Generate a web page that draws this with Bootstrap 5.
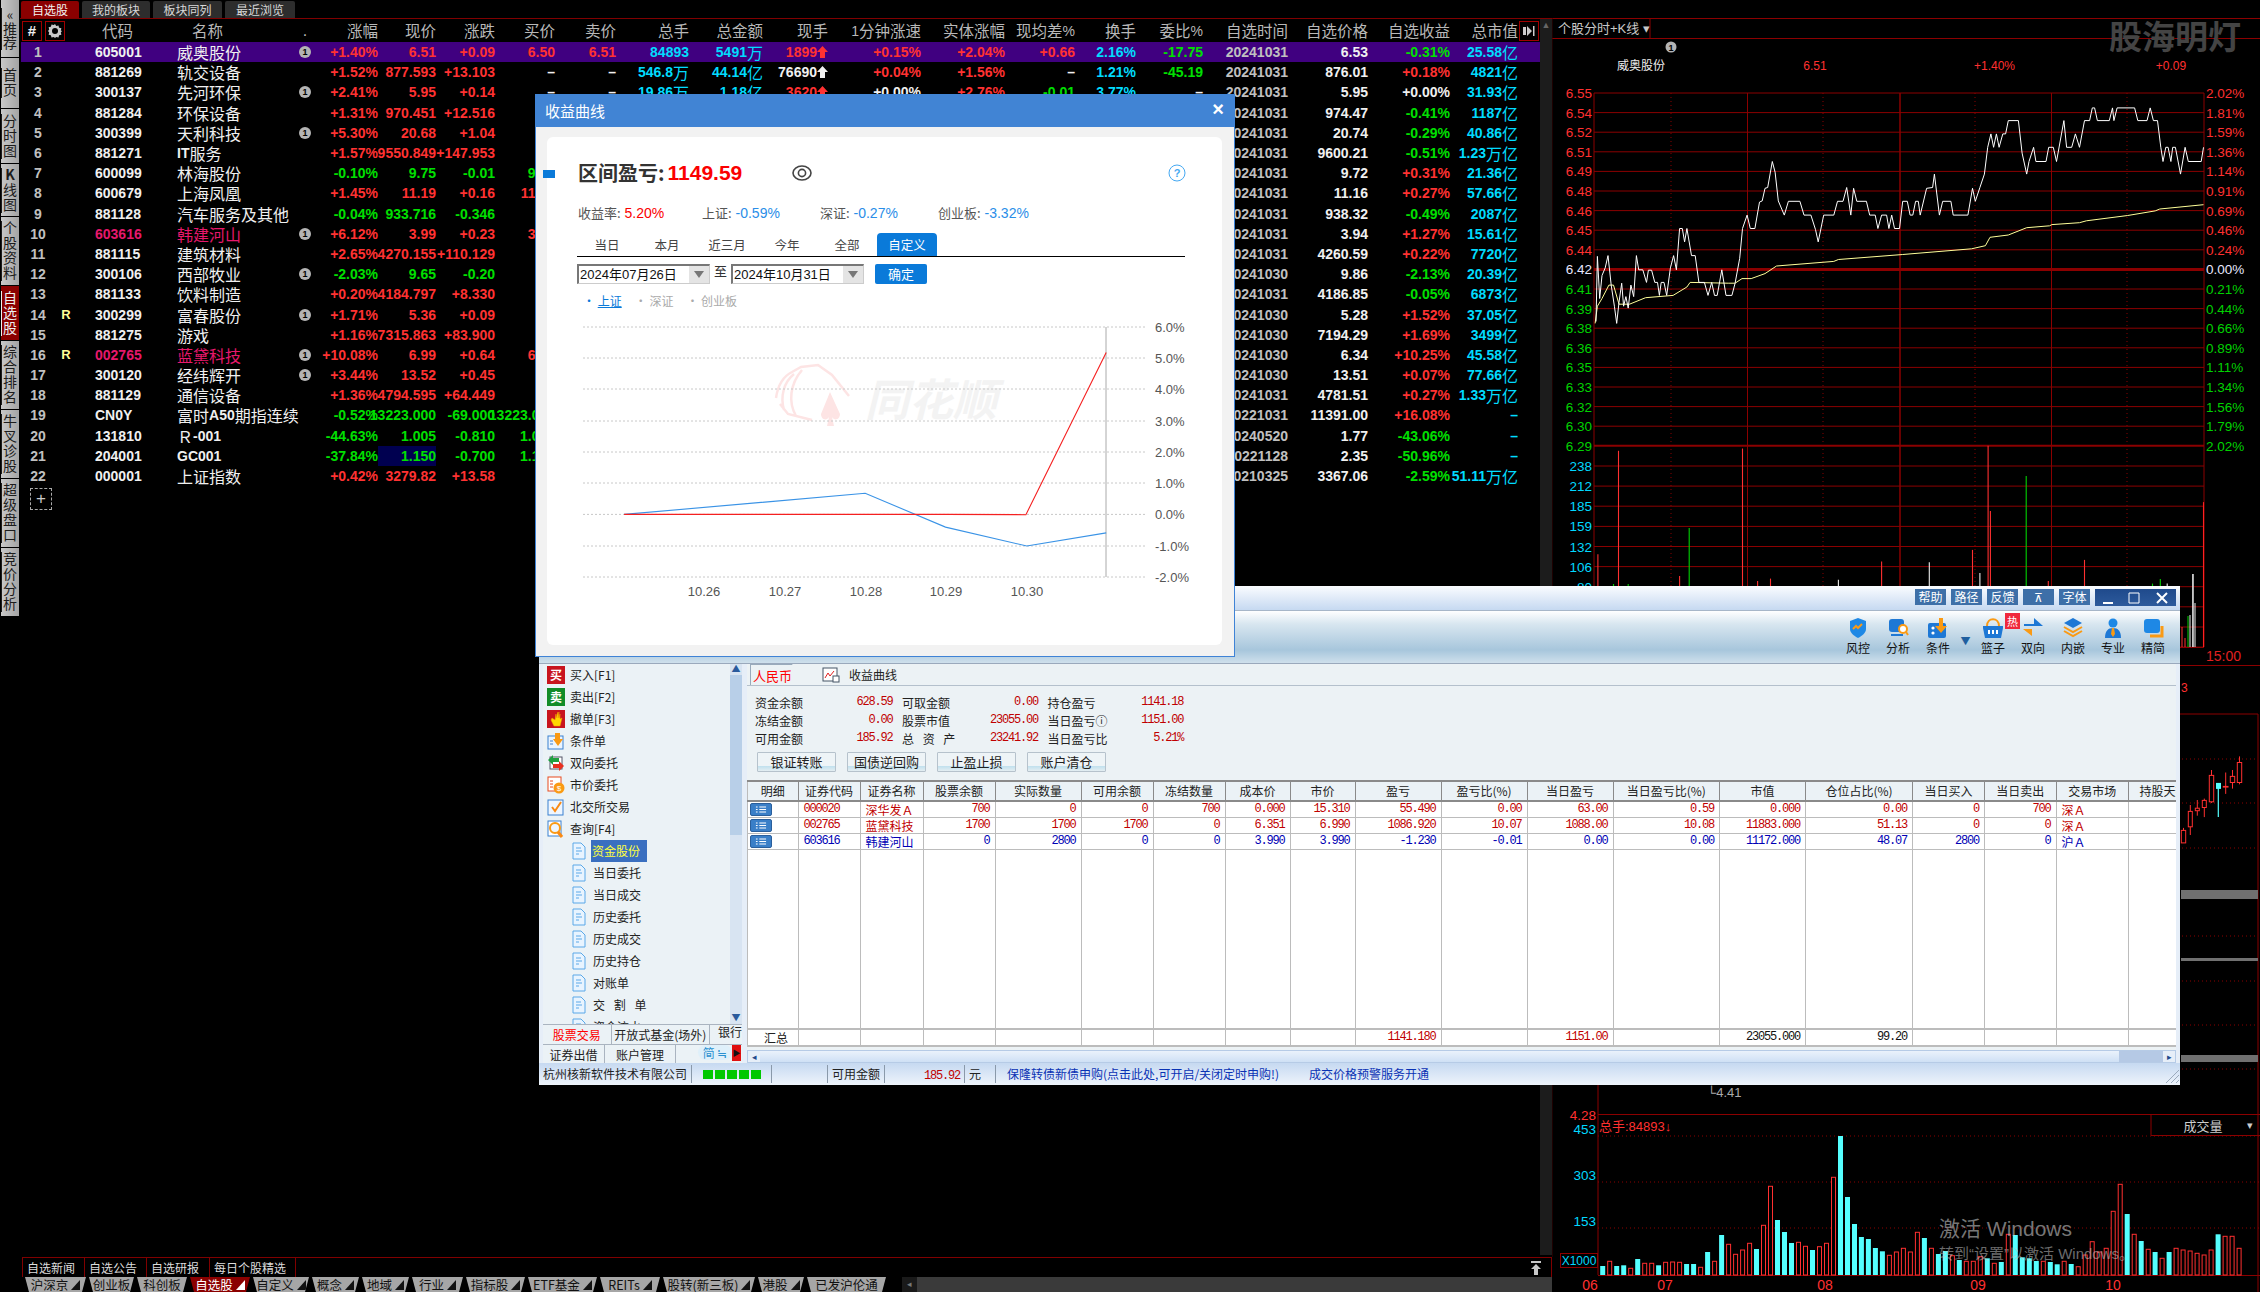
<!DOCTYPE html>
<html lang="zh-CN">
<head>
  <meta charset="UTF-8" />
  <meta name="viewport" content="width=device-width, initial-scale=1" />
  <title>同花顺 自选股</title>
  <link href="https://cdn.jsdelivr.net/npm/bootstrap@5.3.3/dist/css/bootstrap.min.css" rel="stylesheet" />
  <style>
    html, body { margin: 0; background: #000; }
    body { font-family: "Liberation Sans", "Noto Sans CJK SC", sans-serif; width: 2260px; height: 1292px; overflow: hidden; position: relative; }
    .cn { font: 400 12px/1 "Noto Sans CJK SC", sans-serif; }
    .desk { width: 2260px; height: 1292px; }

    /* left rail */
    .rail { width: 20px; gap: 1px; flex: none; padding-left: 1px; }
    .rail-btn { width: 18px; background: linear-gradient(to right, #c8c8c8, #a4a4a4); color: #1c1c1c; writing-mode: vertical-rl; text-orientation: upright; font: 400 14px/18px "Noto Sans CJK SC", sans-serif; letter-spacing: 1px; }
    .rail-btn.on { background: #8b0000; color: #eee; }
    .rb-top { height: 57px; letter-spacing: 0; } .rb-2 { height: 50px; } .rb-3 { height: 54px; } .rb-k { height: 52px; } .rb-4 { height: 68px; }

    /* quote board */
    .board { width: 1532px; height: 1292px; flex: none; }
    .top-tabs { height: 19px; gap: 3px; padding: 1px 0 0 1px; border-bottom: 1px solid #800000; }
    .top-tab { height: 17px; background: #2d2d2d; color: #d8d8d8; font: 400 12px/17px "Noto Sans CJK SC", sans-serif; text-align: center; border-radius: 2px 2px 0 0; }
    .top-tab.on { background: #8b0000; color: #f2f2f2; }
    .tt1 { width: 58px; } .tt2 { width: 68px; } .tt3 { width: 69px; } .tt4 { width: 70px; }
    .quotes { width: 1520px; margin-left: 1px; }
    .q-grid { display: grid; grid-template-columns: 34px 22px 100px 118px 20px 63px 58px 59px 60px 61px 73px 74px 65px 93px 84px 70px 61px 67px 85px 80px 82px 68px 21px; }
    .q-head { height: 23px; color: #b8b8b8; align-items: center; }
    .q-head .cn { font-size: 15.5px; color: #b8b8b8; }
    .q-head b { font-size: 14px; font-weight: 400; }
    .q-row { height: 20.2px; font-weight: 700; font-size: 14px; line-height: 20px; color: #f0f0f0; align-items: center; }
    .q-row .cn { font-size: 16px; line-height: 20px; }
    .q-row.pick { background: #400080; }
    .qc { display: flex; justify-content: flex-end; align-items: center; white-space: nowrap; height: 100%; }
    .qc.lft { justify-content: flex-start; }
    .qc.mid { justify-content: center; }
    .pad-code { padding-left: 18px; }
    .pad-hcode { padding-left: 25px; }
    .pad-hname { padding-left: 15px; }
    .idx { color: #c0c0c0; }
    .flag { color: #ffff99; font-size: 13px; }
    .up { color: #ff3232; } .dn { color: #00e000; } .sky { color: #00dcff; } .hot { color: #e6186c; }
    .navy-bg { background: #000050; }
    .info-dot { width: 12px; height: 12px; background: #b4b4b4; color: #000; font: 700 9px/12px "Liberation Sans", sans-serif; }
    .mini-btn { width: 20px; height: 20px; flex: none; border: 1px solid #a00000; color: #eee; font-weight: 700; font-size: 15px; }
    .head-tools { gap: 3px; padding-left: 1px; }
    .plus-box { width: 22px; height: 22px; margin: 2px 0 0 9px; border: 1px dashed #aaa; color: #ccc; font-size: 17px; line-height: 19px; text-align: center; }
    .v-strip { width: 12px; background: #1c1c1c; color: #666; font-size: 9px; text-align: center; margin-bottom: 2px; }
    .news-row { height: 20px; margin-left: 2px; border-top: 1px solid #800000; border-right: 1px solid #800000; }
    .news-cell { display: block; padding: 0 4px; border-left: 1px solid #800000; border-right: 1px solid #800000; margin-right: -1px; color: #dcdcdc; font: 400 12px/19px "Noto Sans CJK SC", sans-serif; }
    .w-a { width: 63px; } .w-b { width: 64px; } .w-c { width: 87px; }
    .mkt-row { height: 15px; }
    .mkt-tabs { margin-left: 5px; display: grid; grid-template-columns: 61px 45px 50px 60px 56px 47px 47px 51px 59px 69px 60px 92px 46px 79px; column-gap: 3px; width: 865px; }
    .mkt-tab { background: #a6a6a6; color: #111; font: 400 12.5px/15px "Noto Sans CJK SC", sans-serif; white-space: nowrap; clip-path: polygon(0 0, 100% 0, calc(100% - 4px) 100%, 4px 100%); gap: 3px; }
    .mkt-tab.on { background: #8b0000; color: #fff; }
    .mkt-tab i { width: 0; height: 0; border-left: 9px solid transparent; border-bottom: 10px solid #111; }
    .mkt-tab.on i { border-bottom-color: #fff; }
    .h-track { margin-left: 13px; width: 650px; background: #3a3a3a; }
    .h-track span { width: 15px; background: #1a1a1a; color: #777; font-size: 9px; line-height: 15px; text-align: center; }
    .chart-side { width: 708px; height: 1292px; flex: none; display: block; }

    /* floating windows */
    .earn-win { position: absolute; left: 535px; top: 94px; width: 700px; height: 563px; background: #f2f2f2; border: 1px solid #3f83d6; border-top: 0; z-index: 3; }
    .earn-title { height: 33px; background: #4184d4; color: #fff; padding: 0 9px; font: 400 15px/33px "Noto Sans CJK SC", sans-serif; }
    .earn-close { font: 700 20px/30px "Liberation Sans", sans-serif; padding-right: 1px; }
    .earn-card { position: relative; width: 675px; height: 508px; margin: 10px 0 0 11px; background: #fff; border-radius: 6px; padding-top: 24px; color: #333; }
    .blue-mark { position: absolute; left: -4px; top: 33px; width: 12px; height: 8px; background: #0a7ad9; }
    .earn-head { height: 24px; padding: 0 36px 0 31px; font-weight: 700; font-size: 20px; }
    .earn-head .cn { font: 700 20px/24px "Noto Sans CJK SC", sans-serif; color: #333; }
    .earn-sum { font-size: 21px; color: #fb0000; margin-left: 3px; }
    .eye { margin-left: 50px; }
    .earn-stats { display: grid; grid-template-columns: 124px 118px 118px 1fr; margin: 18px 0 0 31px; height: 21px; align-items: center; font-size: 14px; color: #2a8ee8; }
    .earn-stats .cn { font-size: 13px; color: #555; }
    .earn-stats .bad { color: #fb0000; }
    .earn-tabs { margin: 8.5px 37px 0 30px; height: 24px; border-bottom: 1px solid #000; }
    .earn-tab { width: 60px; height: 23px; color: #444; font: 400 12.5px/24px "Noto Sans CJK SC", sans-serif; text-align: center; }
    .earn-tab.on { background: #0a7ad9; color: #fff; border-radius: 4px 4px 0 0; }
    .earn-dates { margin: 7px 0 0 30px; height: 20px; color: #333; }
    .pick-box { width: 133px; height: 20px; background: #fff; border: 1px solid #ccc; border-top: 2px solid #777; border-left: 2px solid #777; font: 400 13px/17px "Liberation Sans", "Noto Sans CJK SC", sans-serif; padding-left: 1px; color: #111; white-space: nowrap; overflow: hidden; }
    .pick-arrow { width: 20px; height: 100%; background: #e4e4e4; }
    .pick-arrow i { border-left: 5px solid transparent; border-right: 5px solid transparent; border-top: 7px solid #777; }
    .pick-sep { width: 21px; text-align: center; font-size: 13px; }
    .ok-btn { width: 52px; height: 20px; margin-left: 11px; padding: 0; border: 0; background: #0a7ad9; color: #fff; font: 400 13px/20px "Noto Sans CJK SC", sans-serif; border-radius: 2px; }
    .earn-legend { margin: 7px 0 0 36px; height: 20px; gap: 13px; font: 400 12px/20px "Noto Sans CJK SC", sans-serif; color: #aaa; }
    .earn-legend u { color: #0a7ad9; }
    .earn-legend .act { color: #0a7ad9; }
    .earn-plot { display: block; position: absolute; left: 0; top: 173px; }

    .trade-win { position: absolute; left: 539px; top: 586px; width: 1641px; height: 499px; background: #e6eef8; color: #222; font: 400 12px/1.2 "Noto Sans CJK SC", sans-serif; z-index: 2; }
    .trade-head { height: 25px; background: linear-gradient(to bottom, #fafcff, #c6d9f1); border-bottom: 1px solid #a7b6c8; padding: 3px 4px 0 0; gap: 5px; }
    .t-btn { width: 31px; height: 16px; padding: 0; border: 0; border-radius: 0; background: #3d6fa8; color: #fff; font: 400 12px/16px "Noto Sans CJK SC", sans-serif; }
    .win-ctl { width: 81px; height: 17px; background: linear-gradient(to bottom, #1f4a8c, #2d5a9c); color: #fff; }
    .trade-tool { height: 53px; background: linear-gradient(to bottom, #fff 0%, #d8e6f0 25%, #a7c6dc 75%, #cfe0ec 100%); border-bottom: 1px solid #9aa9bc; padding-right: 7px; }
    .tool-item { width: 40px; text-align: center; position: relative; color: #111; }
    .tool-item svg { display: block; margin: 7px auto 3px; }
    .tool-caret { width: 15px; color: #1f5f9f; font-size: 10px; padding-top: 24px; text-align: center; margin-right: 0; }
    .hot-tag { position: absolute; left: 32px; top: 2px; width: 15px; height: 16px; background: #f0283c; color: #fff; font-size: 11px; line-height: 16px; }
    .trade-body { height: 399px; padding: 0 4px; }
    .left-pane { width: 199px; flex: none; }
    .tree-wrap { height: 360px; background: #ebf2f6; }
    .tree-list { width: 187px; height: 360px; overflow: hidden; }
    .tree-item { height: 22px; padding-left: 4px; gap: 5px; white-space: nowrap; }
    .tree-sub { padding-left: 27px; gap: 5px; word-spacing: 6px; }
    .tree-sub .sel { background: #3a6fc0; color: #ffff3c; height: 22px; line-height: 22px; padding: 0 1px; margin-left: -2px; width: 56px; }
    .tree-scroll { width: 12px; background: #d8e4f2; color: #2a5a9c; font-size: 9px; text-align: center; }
    .tree-thumb { height: 160px; background: #b8cfe8; }
    .tree-ico { width: 18px; height: 18px; flex: none; }
    .ico-text { color: #fff; font-weight: 700; font-size: 12px; line-height: 18px; text-align: center; }
    .ico-buy { background: #c8141e; } .ico-sell { background: #128c28; }
    .pane-tabs { height: 20px; background: #ebf2f6; border-top: 1px solid #aab4c0; white-space: nowrap; overflow: hidden; }
    .pane-tab { height: 19px; line-height: 19px; text-align: center; border-right: 1px solid #aab4c0; }
    .pane-tab.red { color: #f00; }
    .pt1 { width: 72px; } .pt2 { width: 103px; } .pt3 { width: 62px; } .pt4 { width: 71px; }
    .lang-pill { margin-left: 22px; width: 34px; height: 15px; border-radius: 8px; background: #dff0fa; color: #2a90d0; line-height: 15px; text-align: center; }
    .red-go { width: 9px; height: 16px; background: #e01010; color: #111; font-size: 8px; line-height: 16px; text-align: center; }
    .right-pane { width: 1429px; margin-left: 5px; flex: none; background: #ecf2f5; }
    .acc-tabs { height: 22px; border-bottom: 1px solid #b4c0cc; padding-left: 3px; }
    .rmb-tab { width: 55px; color: #f00; font-size: 13px; line-height: 21px; padding-left: 2px; border-left: 1px solid #9ab; border-top: 1px solid #9ab; clip-path: polygon(0 0, 42px 0, 100% 100%, 0 100%); }
    .acc-curve { margin-left: 17px; gap: 9px; line-height: 21px; }
    .acc-grid { display: grid; grid-template-columns: 137.6px 136px 136px; column-gap: 9.4px; grid-auto-rows: 18px; padding: 8px 0 0 8px; height: 62px; width: 440px; align-items: center; }
    .acc-cell { white-space: nowrap; word-spacing: 6px; }
    .num { font: 400 12px/1 "Liberation Mono", monospace; letter-spacing: -1.2px; }
    .red-num { color: #c00000; }
    .acc-btns { padding: 4px 0 0 10px; gap: 11px; height: 32px; }
    .acc-btn { width: 79px; height: 20px; padding: 0; background: linear-gradient(to bottom, #eef4f7 0%, #eef4f7 70%, #bfe0ee 72%, #e4eef2 100%); border: 1px solid #b6c2cc; border-radius: 1px; color: #222; font: 400 13px/18px "Noto Sans CJK SC", sans-serif; }
    .pos-box { height: 267px; overflow: hidden; background: #fff; }
    .pos-table { table-layout: fixed; width: 1429px; height: 267px; border-collapse: collapse; margin: 0; }
    .pos-table th, .pos-table td { border: 1px solid #bcbcbc; border-width: 0 1px; padding: 0 5px; white-space: nowrap; overflow: hidden; font-weight: 400; }
    .pos-table th { height: 20px; background: #ebf2f6; border-top: 2px solid #8a8a8a; border-bottom: 2px solid #8a8a8a; text-align: center; border-right-color: #8a8a8a; color: #222; }
    .pos-table td { height: 16px; border-bottom: 1px solid #bcbcbc; text-align: right; line-height: 15px; }
    .pos-table td.lf { text-align: left; }
    .pos-table tr.fill td { height: auto; border-bottom: 2px solid #bcbcbc; }
    .pos-table tr.sum td { height: 17px; border-bottom: 2px solid #bcbcbc; }
    .pos-blue { color: #0000b4; } .pos-red { color: #c00000; } .pos-blk { color: #111; }
    .row-ico { width: 22px; height: 13px; margin-left: -3px; background: #3a7fc8; border: 1px solid #2a5f9c; border-radius: 2px; }
    .h-scroll { height: 13px; margin-top: 3px; background: #d0e0f5; border: 1px solid #b6cbe6; }
    .h-scroll span { width: 12px; color: #1f4a8c; font-size: 9px; line-height: 11px; text-align: center; background: #e6eef8; }
    .h-thumb { background: linear-gradient(to bottom, #eaf2fb, #cfe0f5); }
    .h-end { width: 44px; background: #b5c9e5; }
    .trade-status { display: grid; grid-template-columns: 153px 80px 56px 57px 80px 31px 1fr 20px; height: 22px; background: linear-gradient(to bottom, #c6d9f1, #eef4fb); padding-left: 0; align-items: center; white-space: nowrap; }
    .st-cell { height: 18px; line-height: 18px; border-right: 1px solid #8a99aa; padding-left: 4px; }
    .st-blocks { gap: 2px; padding-left: 11px; }
    .st-blocks i { width: 10px; height: 9px; background: #00c800; margin-top: 5px; }
    .st-blue { color: #0a32b4; border-right: 0; padding-left: 11px; }
    .st-blue span { position: absolute; left: 770px; }
  </style>
</head>
<body>

<svg width="0" height="0" class="position-absolute">
  <symbol id="doc" viewBox="0 0 18 18"><path d="M3 1h8l4 4v12H3z" fill="#e8f4ff" stroke="#5aa8e8"/><path d="M6 6h5M6 9h6M6 12h3" stroke="#5aa8e8"/></symbol>
  <symbol id="hand" viewBox="0 0 18 18"><rect width="18" height="18" fill="#c8141e"/><path d="M4 10l3 6h6l2-8-2 1V4l-1 4V2l-1 6V2L9 8V4L8 10 5 8z" fill="#ffd800" stroke="#f0a000" stroke-width=".5"/></symbol>
  <symbol id="cond" viewBox="0 0 18 18"><rect x="1" y="4" width="15" height="13" fill="#eaf4ff" stroke="#3a80d0"/><path d="M8 1h5v6h3l-5 7-5-7h2z" fill="#fa9a14"/><path d="M3 9h3M3 12h3" stroke="#3a80d0"/></symbol>
  <symbol id="both" viewBox="0 0 18 18"><rect x="3" y="3" width="12" height="12" fill="#fff" stroke="#556"/><path d="M1 6l5-5v3h6v4H6v3z" fill="#20a040"/><path d="M17 12l-5 5v-3H6v-4h6V7z" fill="#e83020"/></symbol>
  <symbol id="mkt" viewBox="0 0 18 18"><rect x="1" y="1" width="13" height="14" fill="#fff" stroke="#e84a1e"/><path d="M3 5h3M3 8h3M3 11h3" stroke="#e84a1e"/><circle cx="12" cy="12" r="5.5" fill="#fa9a14"/><text x="12" y="15" font-size="8" fill="#fff" text-anchor="middle" font-family="Liberation Sans">$</text></symbol>
  <symbol id="chk" viewBox="0 0 18 18"><rect x="1" y="2" width="15" height="15" fill="#eef6ff" stroke="#3a80d0"/><path d="M5 9l3 4 6-9" fill="none" stroke="#fa8a14" stroke-width="2"/></symbol>
  <symbol id="lens" viewBox="0 0 18 18"><rect x="1" y="1" width="13" height="15" fill="#fff" stroke="#3a80d0"/><circle cx="8" cy="8" r="5" fill="#eef6ff" stroke="#fa9a14" stroke-width="2"/><path d="M11 12l4 5" stroke="#fa8a14" stroke-width="3"/></symbol>
</svg>

<div class="desk d-flex">
  <nav class="rail d-flex flex-column">
    <a class="rail-btn rb-top d-flex align-items-center justify-content-center">«推荐</a>
    <a class="rail-btn rb-2 d-flex align-items-center justify-content-center">首页</a>
    <a class="rail-btn rb-3 d-flex align-items-center justify-content-center">分时图</a>
    <a class="rail-btn rb-k d-flex align-items-center justify-content-center"><b>K</b>线图</a>
    <a class="rail-btn rb-4 d-flex align-items-center justify-content-center">个股资料</a>
    <a class="rail-btn rb-3 on d-flex align-items-center justify-content-center">自选股</a>
    <a class="rail-btn rb-4 d-flex align-items-center justify-content-center">综合排名</a>
    <a class="rail-btn rb-4 d-flex align-items-center justify-content-center">牛叉诊股</a>
    <a class="rail-btn rb-4 d-flex align-items-center justify-content-center">超级盘口</a>
    <a class="rail-btn rb-4 d-flex align-items-center justify-content-center">竞价分析</a>
  </nav>

  <main class="board d-flex flex-column">
    <div class="top-tabs d-flex">
      <div class="top-tab tt1 on">自选股</div>
      <div class="top-tab tt2">我的板块</div>
      <div class="top-tab tt3">板块同列</div>
      <div class="top-tab tt4">最近浏览</div>
    </div>
    <div class="d-flex flex-grow-1">
      <div class="quotes">
        <div class="q-grid q-head" id="quoteHead"></div>
        <div id="quoteRows"></div>
        <div class="plus-box">+</div>
      </div>
      <div class="v-strip">▲<div class="h-100"></div></div>
    </div>
    <div class="news-row d-flex align-items-center">
      <span class="news-cell w-a">自选新闻</span>
      <span class="news-cell w-a">自选公告</span>
      <span class="news-cell w-b">自选研报</span>
      <span class="news-cell w-c">每日个股精选</span>
      <svg class="ms-auto me-2" width="14" height="16" viewBox="0 0 14 16"><path d="M2 1h10v2H2zM7 4l5 5H9v6H5V9H2z" fill="#c8c8c8"/></svg>
    </div>
    <div class="mkt-row d-flex">
      <div class="mkt-tabs" id="marketTabs"></div>
      <div class="h-track d-flex"><span>◂</span></div>
    </div>
  </main>

  <svg class="chart-side" id="sideChart" viewBox="1552 0 708 1292" width="708" height="1292"></svg>
</div>

<section class="trade-win d-flex flex-column">
  <div class="trade-head d-flex justify-content-end">
    <button class="btn t-btn">帮助</button>
    <button class="btn t-btn">路径</button>
    <button class="btn t-btn">反馈</button>
    <button class="btn t-btn">&#8892;</button>
    <button class="btn t-btn">字体</button>
    <div class="win-ctl d-flex justify-content-around align-items-center">
      <svg width="10" height="14" viewBox="0 0 10 14"><path d="M0 11h10v2H0z" fill="#fff"/></svg>
      <svg width="12" height="14" viewBox="0 0 12 14"><path d="M1 2h10v10H1z" fill="none" stroke="#fff"/></svg>
      <svg width="12" height="14" viewBox="0 0 12 14"><path d="M1 2l10 10M11 2L1 12" stroke="#fff" stroke-width="2"/></svg>
    </div>
  </div>
  <div class="trade-tool d-flex justify-content-end">
    <div class="tool-item"><svg width="20" height="20" viewBox="0 0 20 20"><path d="M10 0l8 3v8c0 4-4 7-8 9-4-2-8-5-8-9V3z" fill="#1e88e5"/><path d="M5 11l3-3 2 2 4-4" fill="none" stroke="#fa9a14" stroke-width="2"/></svg>风控</div>
    <div class="tool-item"><svg width="22" height="20" viewBox="0 0 22 20"><rect x="2" y="1" width="15" height="13" rx="3" fill="#1e78d5"/><path d="M4 16h12v2H4z" fill="#1e78d5"/><circle cx="16" cy="11" r="4" fill="#fff" stroke="#fa9a14" stroke-width="2"/><path d="M19 14l2 3" stroke="#fa9a14" stroke-width="2"/></svg>分析</div>
    <div class="tool-item"><svg width="22" height="20" viewBox="0 0 22 20"><rect x="1" y="5" width="18" height="15" rx="2" fill="#1e78d5"/><circle cx="6" cy="10" r="1.6" fill="#fff"/><circle cx="6" cy="15" r="1.6" fill="#fff"/><path d="M12 0h4v8h4l-6 7-6-7h4z" fill="#fa9a14"/></svg>条件</div>
    <div class="tool-caret">▼</div>
    <div class="tool-item"><svg width="22" height="20" viewBox="0 0 22 20"><path d="M5 8c0-9 12-9 12 0" fill="none" stroke="#fa9a14" stroke-width="2"/><path d="M1 8h20v2l-2 10H3L1 10z" fill="#1e78d5"/><path d="M7 12v4M11 12v4M15 12v4" stroke="#fff" stroke-width="2"/></svg>篮子<span class="hot-tag">热</span></div>
    <div class="tool-item"><svg width="22" height="20" viewBox="0 0 22 20"><path d="M2 6h10V0l9 8H2z" fill="#1e78d5"/><path d="M20 11H10v7L1 11z" fill="#fa9a14"/></svg>双向</div>
    <div class="tool-item"><svg width="22" height="20" viewBox="0 0 22 20"><path d="M11 0l9 5-9 5-9-5z" fill="#1e78d5"/><path d="M2 9l9 5 9-5M2 13l9 5 9-5" fill="none" stroke="#fa9a14" stroke-width="2"/></svg>内嵌</div>
    <div class="tool-item"><svg width="20" height="20" viewBox="0 0 20 20"><circle cx="10" cy="5" r="4.5" fill="#1e88e5"/><path d="M2 20c0-7 3-10 8-10s8 3 8 10z" fill="#1e78d5"/><path d="M9 10h2l1 6-2 3-2-3z" fill="#fa9a14"/></svg>专业</div>
    <div class="tool-item"><svg width="22" height="20" viewBox="0 0 22 20"><path d="M8 18h12V8" fill="none" stroke="#fa9a14" stroke-width="3"/><rect x="2" y="1" width="16" height="14" rx="3" fill="#1e88e5"/></svg>精简</div>
  </div>

  <div class="trade-body d-flex">
    <div class="left-pane d-flex flex-column">
      <div class="tree-wrap d-flex">
        <div class="tree-list">
          <div class="tree-item d-flex align-items-center"><span class="tree-ico ico-text ico-buy">买</span>买入[F1]</div>
          <div class="tree-item d-flex align-items-center"><span class="tree-ico ico-text ico-sell">卖</span>卖出[F2]</div>
          <div class="tree-item d-flex align-items-center"><svg class="tree-ico"><use href="#hand"/></svg>撤单[F3]</div>
          <div class="tree-item d-flex align-items-center"><svg class="tree-ico"><use href="#cond"/></svg>条件单</div>
          <div class="tree-item d-flex align-items-center"><svg class="tree-ico"><use href="#both"/></svg>双向委托</div>
          <div class="tree-item d-flex align-items-center"><svg class="tree-ico"><use href="#mkt"/></svg>市价委托</div>
          <div class="tree-item d-flex align-items-center"><svg class="tree-ico"><use href="#chk"/></svg>北交所交易</div>
          <div class="tree-item d-flex align-items-center"><svg class="tree-ico"><use href="#lens"/></svg>查询[F4]</div>
          <div id="treeSub"></div>
        </div>
        <div class="tree-scroll d-flex flex-column">▲<div class="tree-thumb"></div><div class="flex-grow-1"></div>▼</div>
      </div>
      <div class="pane-tabs d-flex">
        <div class="pane-tab pt1 red">股票交易</div>
        <div class="pane-tab pt2">开放式基金(场外)</div>
        <div class="ps-2">银行</div>
      </div>
      <div class="pane-tabs d-flex">
        <div class="pane-tab pt3">证券出借</div>
        <div class="pane-tab pt4">账户管理</div>
        <div class="lang-pill">简 ≒</div>
        <div class="red-go">▶</div>
      </div>
    </div>

    <div class="right-pane d-flex flex-column">
      <div class="acc-tabs d-flex">
        <div class="rmb-tab">人民币</div>
        <div class="acc-curve d-flex align-items-center">
          <svg width="18" height="16" viewBox="0 0 18 16"><rect x="1" y="1" width="14" height="13" fill="#fff" stroke="#456"/><path d="M3 11l3-5 2 3 4-5" fill="none" stroke="#e02020"/><rect x="11" y="9" width="6" height="6" fill="#fff" stroke="#456"/></svg>
          收益曲线
        </div>
      </div>
      <div class="acc-grid" id="accGrid"></div>
      <div class="acc-btns d-flex">
        <button class="btn acc-btn">银证转账</button>
        <button class="btn acc-btn">国债逆回购</button>
        <button class="btn acc-btn">止盈止损</button>
        <button class="btn acc-btn">账户清仓</button>
      </div>
      <div class="pos-box"><table class="pos-table" id="posTable"></table></div>
      <div class="h-scroll d-flex"><span>◂</span><div class="h-thumb flex-grow-1"></div><div class="h-end"></div><span>▸</span></div>
    </div>
  </div>

  <div class="trade-status position-relative">
    <div class="st-cell">杭州核新软件技术有限公司</div>
    <div class="st-cell st-blocks d-flex"><i></i><i></i><i></i><i></i><i></i></div>
    <div class="st-cell"></div>
    <div class="st-cell">可用金额</div>
    <div class="st-cell text-end pe-1"><span class="num red-num">185.92</span></div>
    <div class="st-cell">元</div>
    <div class="st-cell st-blue">保隆转债新债申购(点击此处,可开启/关闭定时申购!)<span>成交价格预警服务开通</span></div>
    <svg width="20" height="20" viewBox="0 0 20 20"><path d="M6 19L19 6M11 19l8-8M16 19l3-3" stroke="#9aa9bc"/></svg>
  </div>
</section>

<section class="earn-win">
  <div class="earn-title d-flex justify-content-between">
    <span>收益曲线</span><span class="earn-close">×</span>
  </div>
  <div class="earn-card">
    <span class="blue-mark"></span>
    <div class="earn-head d-flex align-items-center">
      <span class="cn">区间盈亏:</span><span class="earn-sum">1149.59</span>
      <svg class="eye" width="20" height="16" viewBox="0 0 20 16"><ellipse cx="10" cy="8" rx="9" ry="7" fill="none" stroke="#444" stroke-width="1.6"/><circle cx="10" cy="8" r="3.6" fill="none" stroke="#444" stroke-width="1.6"/></svg>
      <svg class="ms-auto" width="18" height="18" viewBox="0 0 18 18"><circle cx="9" cy="9" r="8" fill="none" stroke="#46a9f2"/><text x="9" y="13" font-size="11" fill="#46a9f2" text-anchor="middle" font-family="Liberation Sans">?</text></svg>
    </div>
    <div class="earn-stats">
      <div><span class="cn">收益率:</span> <span class="bad">5.20%</span></div>
      <div><span class="cn">上证:</span> -0.59%</div>
      <div><span class="cn">深证:</span> -0.27%</div>
      <div><span class="cn">创业板:</span> -3.32%</div>
    </div>
    <div class="earn-tabs d-flex">
      <div class="earn-tab">当日</div><div class="earn-tab">本月</div><div class="earn-tab">近三月</div><div class="earn-tab">今年</div><div class="earn-tab">全部</div><div class="earn-tab on">自定义</div>
    </div>
    <div class="earn-dates d-flex">
      <div class="pick-box d-flex justify-content-between"><span>2024年07月26日</span><span class="pick-arrow d-flex align-items-center justify-content-center"><i></i></span></div>
      <div class="pick-sep cn">至</div>
      <div class="pick-box d-flex justify-content-between"><span>2024年10月31日</span><span class="pick-arrow d-flex align-items-center justify-content-center"><i></i></span></div>
      <button class="btn ok-btn">确定</button>
    </div>
    <div class="earn-legend d-flex">
      <span class="act">• <u>上证</u></span><span>• 深证</span><span>• 创业板</span>
    </div>
    <svg class="earn-plot" id="earnPlot" viewBox="547 310 675 334" width="675" height="334"></svg>
  </div>
</section>

<script>
  const txt = (x, y, s, fill, anchor = 'start', size = 13.5, extra = '') =>
    `<text x="${x}" y="${y}" fill="${fill}" text-anchor="${anchor}" font-size="${size}" font-family="Liberation Sans, Noto Sans CJK SC, sans-serif" ${extra}>${s}</text>`;
  const line = (x1, y1, x2, y2, col, w = 1, dash = '') =>
    `<line x1="${x1}" y1="${y1}" x2="${x2}" y2="${y2}" stroke="${col}" stroke-width="${w}" ${dash ? `stroke-dasharray="${dash}"` : ''}/>`;
  const cnWrap = s => s.replace(/([\u4e00-\u9fa5\uff21-\uff3a]+)/g, '<span class="cn">$1</span>');

  // quote board
  const gearIco = '<svg width="16" height="16" viewBox="0 0 16 16"><path d="M8 1l1.2 2 2.3-.6.6 2.3 2.3.6-.6 2.3L15 8l-1.2 1.4.6 2.3-2.3.6-.6 2.3-2.3-.6L8 15l-1.2-1-2.3.6-.6-2.3-2.3-.6.6-2.3L1 8l1.2-1.4-.6-2.3 2.3-.6.6-2.3 2.3.6z" fill="#c8c8c8"/><circle cx="8" cy="8" r="3" fill="#000"/></svg>';
  const heads = ['', '', '代码', '名称', '.', '涨幅', '现价', '涨跌', '买价', '卖价', '总手', '总金额', '现手', '1分钟涨速', '实体涨幅', '现均差%', '换手', '委比%', '自选时间', '自选价格', '自选收益', '总市值'];
  document.getElementById('quoteHead').innerHTML = heads.map((h, i) => {
    if (i === 0) return `<div class="qc lft head-tools"><span class="mini-btn d-flex align-items-center justify-content-center">#</span><span class="mini-btn d-flex align-items-center justify-content-center">${gearIco}</span></div>`;
    if (i === 1) return '<div></div>';
    if (i === 2) return `<div class="qc lft pad-hcode">${cnWrap(h)}</div>`;
    if (i === 3) return `<div class="qc lft pad-hname">${cnWrap(h)}</div>`;
    if (i === 4) return `<div class="qc mid">${h}</div>`;
    return `<div class="qc">${cnWrap(h).replace(/^([^<]+)/, '<b>$1</b>').replace(/(%)$/, '<b>$1</b>')}</div>`;
  }).join('') + '<div class="qc mid"><span class="mini-btn d-flex align-items-center justify-content-center"><svg width="12" height="12" viewBox="0 0 12 12"><path d="M0 2h3v8H0zM4 1l5 5-5 5zM10 1h1.5v10H10z" fill="#ccc"/></svg></span></div>';

  const quoteData = `1||605001|威奥股份|i|+1.40%|6.51|+0.09|6.50|6.51|84893|5491万|1899r|+0.15%|+2.04%|+0.66|2.16%|-17.75|20241031|6.53|-0.31%|25.58亿
2||881269|轨交设备||+1.52%|877.593|+13.103|–|–|546.8万|44.14亿|76690w|+0.04%|+1.56%|–|1.21%|-45.19|20241031|876.01|+0.18%|4821亿
3||300137|先河环保|i|+2.41%|5.95|+0.14|–|–|19.86万|1.18亿|3620r|+0.00%|+2.76%|-0.01|3.77%|–|20241031|5.95|+0.00%|31.93亿
4||881284|环保设备||+1.31%|970.451|+12.516|||||||||||20241031|974.47|-0.41%|1187亿
5||300399|天利科技|i|+5.30%|20.68|+1.04|||||||||||20241031|20.74|-0.29%|40.86亿
6||881271|IT服务||+1.57%|9550.849|+147.953|||||||||||20241031|9600.21|-0.51%|1.23万亿
7||600099|林海股份||-0.10%|9.75|-0.01|9.75||||||||||20241031|9.72|+0.31%|21.36亿
8||600679|上海凤凰||+1.45%|11.19|+0.16|11.18||||||||||20241031|11.16|+0.27%|57.66亿
9||881128|汽车服务及其他||-0.04%|933.716|-0.346|||||||||||20241031|938.32|-0.49%|2087亿
10||603616|韩建河山|i|+6.12%|3.99|+0.23|3.98||||||||||20241031|3.94|+1.27%|15.61亿
11||881115|建筑材料||+2.65%|4270.155|+110.129|||||||||||20241031|4260.59|+0.22%|7720亿
12||300106|西部牧业|i|-2.03%|9.65|-0.20|||||||||||20241030|9.86|-2.13%|20.39亿
13||881133|饮料制造||+0.20%|4184.797|+8.330|||||||||||20241031|4186.85|-0.05%|6873亿
14|R|300299|富春股份|i|+1.71%|5.36|+0.09|||||||||||20241030|5.28|+1.52%|37.05亿
15||881275|游戏||+1.16%|7315.863|+83.900|||||||||||20241030|7194.29|+1.69%|3499亿
16|R|002765|蓝黛科技|i|+10.08%|6.99|+0.64|6.98||||||||||20241030|6.34|+10.25%|45.58亿
17||300120|经纬辉开|i|+3.44%|13.52|+0.45|||||||||||20241030|13.51|+0.07%|77.66亿
18||881129|通信设备||+1.36%|4794.595|+64.449|||||||||||20241031|4781.51|+0.27%|1.33万亿
19||CN0Y|富时A50期指连续||-0.52%|13223.000|-69.000|13223.000||||||||||20221031|11391.00|+16.08%|–
20||131810|Ｒ-001||-44.63%|1.005|-0.810|1.005||||||||||20240520|1.77|-43.06%|–
21||204001|GC001||-37.84%|1.150|-0.700|1.150||||||||||20221128|2.35|-50.96%|–
22||000001|上证指数||+0.42%|3279.82|+13.58|||||||||||20210325|3367.06|-2.59%|51.11万亿`;

  const signCls = v => v[0] === '+' && !/^\+0\.00/.test(v) ? 'up' : v[0] === '-' ? 'dn' : '';
  const upArrow = c => `<svg width="11" height="12" viewBox="0 0 11 12"><path d="M5.5 0L11 6H8v6H3V6H0z" fill="${c}"/></svg>`;

  document.getElementById('quoteRows').innerHTML = quoteData.split('\n').map(l => {
    const c = l.split('|');
    const rowUp = c[5][0] === '+' ? 'up' : 'dn';
    const pink = c[2] === '603616' || c[2] === '002765';
    const cells = [];
    cells.push(`<div class="qc mid idx">${c[0]}</div>`);
    cells.push(`<div class="qc mid flag">${c[1]}</div>`);
    cells.push(`<div class="qc lft pad-code ${pink ? 'hot' : ''}">${c[2]}</div>`);
    cells.push(`<div class="qc lft ${pink ? 'hot' : ''}">${cnWrap(c[3])}</div>`);
    cells.push(`<div class="qc mid">${c[4] === 'i' ? '<span class="info-dot rounded-circle d-inline-block text-center">1</span>' : ''}</div>`);
    for (let i = 5; i <= 9; i++) {
      const navy = c[2] === '204001' && i === 6 ? ' navy-bg' : '';
      const cls = c[i] === '–' ? '' : rowUp;
      cells.push(`<div class="qc ${cls}${navy}">${c[i]}</div>`);
    }
    cells.push(`<div class="qc sky">${cnWrap(c[10])}</div>`);
    cells.push(`<div class="qc sky">${cnWrap(c[11])}</div>`);
    const hand = c[12];
    if (hand) {
      const red = hand.endsWith('r');
      cells.push(`<div class="qc ${red ? 'up' : ''}">${hand.slice(0, -1)}${upArrow(red ? '#ff3232' : '#f0f0f0')}</div>`);
    } else cells.push('<div class="qc"></div>');
    for (const i of [13, 14, 15]) cells.push(`<div class="qc ${signCls(c[i])}">${c[i]}</div>`);
    cells.push(`<div class="qc sky">${c[16]}</div>`);
    cells.push(`<div class="qc ${signCls(c[17])}">${c[17]}</div>`);
    cells.push(`<div class="qc idx">${c[18]}</div>`);
    cells.push(`<div class="qc">${c[19]}</div>`);
    cells.push(`<div class="qc ${signCls(c[20])}">${c[20]}</div>`);
    cells.push(`<div class="qc sky">${cnWrap(c[21])}</div>`);
    cells.push('<div></div>');
    return `<div class="q-grid q-row ${c[0] === '1' ? 'pick' : ''}">${cells.join('')}</div>`;
  }).join('');

  // market tabs
  const mkts = [['沪深京', 1], ['创业板', 0], ['科创板', 0], ['自选股', 1, 'on'], ['自定义', 1], ['概念', 1], ['地域', 1], ['行业', 1], ['指标股', 1], ['ETF基金', 1], ['REITs', 1], ['股转(新三板)', 1], ['港股', 1], ['已发沪伦通', 0]];
  document.getElementById('marketTabs').innerHTML = mkts.map(m =>
    `<div class="mkt-tab d-flex justify-content-center align-items-center ${m[2] || ''}">${m[0]}${m[1] ? '<i></i>' : ''}</div>`).join('');

  // tree children
  const subs = ['资金股份', '当日委托', '当日成交', '历史委托', '历史成交', '历史持仓', '对账单', '交 割 单', '资金流水'];
  document.getElementById('treeSub').innerHTML = subs.map((s, i) =>
    `<div class="tree-item tree-sub d-flex align-items-center"><svg class="tree-ico"><use href="#doc"/></svg><span class="${i === 0 ? 'sel' : ''}">${s}</span></div>`).join('');

  // account summary
  const acc = [['资金余额', '628.59'], ['可取金额', '0.00'], ['持仓盈亏', '1141.18'], ['冻结金额', '0.00'], ['股票市值', '23055.00'], ['当日盈亏ⓘ', '1151.00'], ['可用金额', '185.92'], ['总 资 产', '23241.92'], ['当日盈亏比', '5.21%']];
  document.getElementById('accGrid').innerHTML = acc.map(a =>
    `<div class="acc-cell d-flex justify-content-between"><span>${a[0]}</span><span class="num red-num">${a[1]}</span></div>`).join('');

  // positions table
  const colW = [50.6, 62, 63, 72, 86, 72, 72, 65, 65, 86, 86, 86, 106.5, 86, 107, 72, 71.5, 72.5, 70];
  const posHead = ['明细', '证券代码', '证券名称', '股票余额', '实际数量', '可用余额', '冻结数量', '成本价', '市价', '盈亏', '盈亏比(%)', '当日盈亏', '当日盈亏比(%)', '市值', '仓位占比(%)', '当日买入', '当日卖出', '交易市场', '持股天数'];
  const pos = [
    ['pos-red', '000020', '深华发Ａ', '700', '0', '0', '700', '0.000', '15.310', '55.490', '0.00', '63.00', '0.59', '0.000', '0.00', '0', '700', '深Ａ'],
    ['pos-red', '002765', '蓝黛科技', '1700', '1700', '1700', '0', '6.351', '6.990', '1086.920', '10.07', '1088.00', '10.08', '11883.000', '51.13', '0', '0', '深Ａ'],
    ['pos-blue', '603616', '韩建河山', '0', '2800', '0', '0', '3.990', '3.990', '-1.230', '-0.01', '0.00', '0.00', '11172.000', '48.07', '2800', '0', '沪Ａ']
  ];
  const listIco = '<svg class="row-ico d-block" viewBox="0 0 22 13"><path d="M5 3h2v1H5zM9 3h8v1H9zM5 6h2v1H5zM9 6h8v1H9zM5 9h2v1H5zM9 9h8v1H9z" fill="#fff"/></svg>';
  let ph = '<colgroup>' + colW.map(w => `<col style="width:${w}px">`).join('') + '</colgroup>';
  ph += '<tr>' + posHead.map(h => `<th>${h}</th>`).join('') + '</tr>';
  pos.forEach(r => {
    ph += `<tr class="${r[0]}"><td>${listIco}</td><td class="lf num ${r[0]}">${r[1]}</td><td class="lf ${r[0]}">${r[2]}</td>`;
    ph += r.slice(3, 17).map(v => `<td class="num ${r[0]}">${v}</td>`).join('');
    ph += `<td class="lf ${r[0]}">${r[17]}</td><td></td></tr>`;
  });
  ph += '<tr class="fill">' + colW.map(() => '<td></td>').join('') + '</tr>';
  ph += '<tr class="sum">' + colW.map((w, i) => {
    if (i === 0) return '<td class="lf ps-3">汇总</td>';
    if (i === 9) return '<td class="num pos-red">1141.180</td>';
    if (i === 11) return '<td class="num pos-red">1151.00</td>';
    if (i === 13) return '<td class="num pos-blk">23055.000</td>';
    if (i === 14) return '<td class="num pos-blk">99.20</td>';
    return '<td></td>';
  }).join('') + '</tr>';
  document.getElementById('posTable').innerHTML = ph;

  // earnings curve
  (function () {
    const ex = x => +(530 + x / 2.178).toFixed(1), ey = y => +(90 + y / 2.75).toFixed(1);
    let s = '';
    s += `<path d="M776 398c2-14 8-22 16-26l9-5 17-2 14 10 17 21M784 410c-4-14 0-28 10-36M796 416c-8-14-6-32 6-46M812 420l-24-6-8-10" fill="none" stroke="#fde4e4" stroke-width="2.5"/><path d="M830 392l-9 22c0 6 6 7 8 3l-2 9h7l-2-9c2 4 8 3 8-3z" fill="#fde4e4"/>`;
    s += txt(865, 416, '同花顺', '#f3f3f3', 'start', 44, 'font-weight="700" font-style="italic"');
    [['6.0%', 327], ['5.0%', 358], ['4.0%', 389], ['3.0%', 421], ['2.0%', 452], ['1.0%', 483], ['0.0%', 514.4], ['-1.0%', 546], ['-2.0%', 577]].forEach(g => {
      s += line(583, g[1], 1147, g[1], '#c8c8c8', 1, '2 2');
      s += txt(1155, g[1] + 5, g[0], '#555', 'start', 13);
    });
    [['10.26', 704], ['10.27', 785], ['10.28', 866], ['10.29', 946], ['10.30', 1027]].forEach(g => { s += txt(g[1], 596, g[0], '#555', 'middle', 13); });
    s += line(1106, 327, 1106, 577, '#aaa');
    const red = [[205, 1167], [905, 1167], [1080, 1168], [1255, 722]].map(p => ex(p[0]) + ',' + ey(p[1])).join(' ');
    const blue = [[205, 1167], [730, 1109], [905, 1202], [1082, 1254], [1255, 1218]].map(p => ex(p[0]) + ',' + ey(p[1])).join(' ');
    s += `<polyline points="${blue}" fill="none" stroke="#3a93e6" stroke-width="1.1"/>`;
    s += `<polyline points="${red}" fill="none" stroke="#f52020" stroke-width="1.1"/>`;
    document.getElementById('earnPlot').innerHTML = s;
  })();

  // right side charts
  (function () {
    const DR = '#8b0000', RED = '#ff3030', GRN = '#00d200', CY = '#00d8ff';
    const px = x => +(1540 + x / 2.178).toFixed(1), py = y => +(y / 2.613).toFixed(1);
    let s = '';
    s += line(1552, 18.5, 2260, 18.5, DR) + line(1552, 38.5, 2260, 38.5, DR) + line(1650, 18, 1650, 38, DR) + line(1552, 18, 1552, 1257, '#3a0000');
    s += txt(1558, 33, '个股分时+K线 ▾', '#c8c8c8', 'start', 13);
    s += txt(2109, 49, '股海明灯', '#444', 'start', 33, 'font-weight="700"');
    s += `<circle cx="1671" cy="47" r="5.5" fill="#b4b4b4"/>` + txt(1671, 50.5, '1', '#000', 'middle', 9, 'font-weight="700"');
    s += txt(1617, 70, '威奥股份', '#eee', 'start', 12);
    s += txt(1815, 70, '6.51', RED, 'middle', 12);
    s += txt(1994.5, 70, '+1.40%', RED, 'middle', 12);
    s += txt(2171, 70, '+0.09', RED, 'middle', 12);

    // grid
    const prices = ['6.55', '6.54', '6.52', '6.51', '6.49', '6.48', '6.46', '6.45', '6.44', '6.42', '6.41', '6.39', '6.38', '6.36', '6.35', '6.33', '6.32', '6.30', '6.29'];
    const pcts = ['2.02%', '1.81%', '1.59%', '1.36%', '1.14%', '0.91%', '0.69%', '0.46%', '0.24%', '0.00%', '0.21%', '0.44%', '0.66%', '0.89%', '1.11%', '1.34%', '1.56%', '1.79%', '2.02%'];
    prices.forEach((p, i) => {
      const y = +(93 + i * 19.6).toFixed(1);
      const col = i < 9 ? RED : i === 9 ? '#e8e8ff' : GRN;
      s += line(1594, y, 2204, y, DR, i === 9 ? 3 : (i === 18 ? 2 : 1));
      s += txt(1592, y + 5, p, col, 'end', 13.5);
      s += txt(2206, y + 5, pcts[i], col, 'start', 13.5);
    });
    ['238', '212', '185', '159', '132', '106', '80', '53', '27', ''].forEach((v, i) => {
      const y = +(466 + i * 20.12).toFixed(1);
      s += line(1594, y, 2204, y, DR);
      s += txt(1592, y + 5, v, CY, 'end', 13.5);
    });
    [1747.5, 1900, 2051.5].forEach(x => { s += line(x, 93, x, 647, DR, x === 1900 ? 1.5 : 1); });
    [1671, 1823, 1975, 2127].forEach(x => { s += line(x, 93, x, 647, DR, 1, '1 3'); });
    s += line(1594, 93, 1594, 647, DR) + line(2204, 93, 2204, 647, DR) + line(1594, 647.5, 2204, 647.5, DR);

    // volume bars
    [[126, 1448, RED], [171, 1178, RED], [304, 1505, RED], [441, 1172, RED], [474, 1518, RED], [502, 1512, RED], [744, 1467, RED], [942, 1437, RED], [976, 1165, RED], [981, 1335, RED], [1107, 1518, RED], [1186, 1463, RED], [1445, 1312, '#ff2020'],
     [325, 1380, GRN], [160, 1526, GRN], [192, 1526, GRN], [1059, 1244, GRN], [1334, 1525, GRN], [1351, 1513, GRN],
     [650, 1515, '#eee'], [848, 1469, '#eee'], [958, 1497, '#eee'], [1366, 1525, '#eee'], [1422, 1500, '#eee']].forEach(b => {
      s += line(px(b[0]), py(b[1]), px(b[0]), 647, b[2], 1.1);
    });
    [[2182, 627, RED], [2185, 638, RED], [2188, 616, GRN], [2190, 615, '#eee'], [2193, 574, '#eee'], [2195, 603, '#eee']].forEach(b => { s += line(b[0], b[1], b[0], 647, b[2]); });

    // price and average lines
    const white = [122,840,125,670,130,780,135,720,142,700,148,668,155,745,162,800,167,845,172,790,178,740,182,800,187,775,192,805,198,745,204,775,210,668,215,705,224,705,232,738,236,706,243,706,250,738,256,738,260,772,264,738,270,738,276,772,284,700,291,668,297,705,304,597,310,597,315,632,320,597,330,668,338,668,346,738,358,738,366,772,374,738,380,772,386,772,396,705,405,772,418,772,425,740,435,675,441,597,451,562,458,597,468,597,478,528,484,525,490,492,496,490,506,422,512,450,519,525,532,562,541,526,566,526,575,562,590,562,600,600,606,632,618,562,640,562,648,526,660,526,668,490,677,562,683,492,690,526,711,526,718,562,730,562,736,597,744,562,755,562,760,597,766,562,772,597,783,597,790,526,800,526,806,562,812,562,818,526,824,526,828,562,842,492,855,490,859,455,870,562,877,526,895,526,900,562,932,562,942,492,948,526,958,490,968,455,975,385,982,350,988,385,994,350,1000,385,1008,350,1014,350,1020,315,1042,315,1050,400,1060,455,1065,422,1075,385,1080,422,1102,422,1108,385,1118,385,1125,422,1141,315,1147,385,1158,385,1166,350,1175,385,1186,315,1197,315,1203,282,1208,282,1214,315,1240,315,1247,282,1250,315,1257,282,1295,282,1302,315,1322,315,1329,282,1336,315,1345,315,1352,385,1357,422,1363,385,1368,385,1374,422,1378,385,1384,385,1395,455,1405,385,1412,422,1440,422,1445,385];
    const yellow = [120,845,125,800,135,780,150,745,160,745,172,795,195,795,230,778,290,772,320,750,327,738,410,740,425,740,440,728,460,728,490,715,515,695,640,683,650,678,790,665,940,650,970,642,980,620,1020,614,1060,595,1110,590,1115,587,1175,582,1190,577,1280,563,1340,551,1350,546,1445,535];
    const toPts = a => { let o = []; for (let i = 0; i < a.length; i += 2) o.push(px(a[i]) + ',' + py(a[i + 1])); return o.join(' '); };
    s += `<polyline points="${toPts(yellow)}" fill="none" stroke="#ffff99" stroke-width="1"/>`;
    s += `<polyline points="${toPts(white)}" fill="none" stroke="#fff" stroke-width="1"/>`;

    // k chart remains
    s += txt(2206, 661, '15:00', '#e02020', 'start', 14);
    s += line(1552, 665.5, 2260, 665.5, DR);
    s += txt(2181, 692, '3', RED, 'start', 12);
    s += line(2150, 714, 2258, 714, DR) + line(2258, 714, 2258, 1292, DR);
    [759, 803, 848, 892, 936, 981, 1025, 1069].forEach(y => { s += line(1598, y, 2258, y, DR, 1, '1 3'); });
    [[890, 9], [958, 3], [1055, 7]].forEach(b => { s += `<rect x="2181" y="${b[0]}" width="77" height="${b[1]}" fill="#707070"/>`; });
    const ky = y => +(560 + y / 2.8).toFixed(1), kx = x => +(2100 + x / 3).toFixed(1);
    [[244, 257, 757, 792, 750, 792], [265, 277, 704, 747, 686, 770], [286, 298, 695, 702, 672, 716], [307, 319, 673, 693, 668, 720], [328, 341, 603, 677, 588, 680], [370, 384, 634, 636, 595, 655], [391, 404, 606, 623, 588, 640], [412, 425, 567, 623, 550, 628]].forEach(k => {
      const mx = kx((k[0] + k[1]) / 2);
      s += line(mx, ky(k[4]), mx, ky(k[5]), RED);
      s += `<rect x="${kx(k[0])}" y="${ky(k[2])}" width="${kx(k[1]) - kx(k[0])}" height="${ky(k[3]) - ky(k[2])}" fill="#000" stroke="${RED}"/>`;
    });
    s += line(kx(355), ky(624), kx(355), ky(720), '#55ffff', 1.2) + `<rect x="${kx(348)}" y="${ky(624)}" width="5" height="6" fill="#55ffff"/>`;

    // lower volume panel
    s += line(1598, 1085, 1598, 1275, DR) + line(1598, 1114.5, 2260, 1114.5, DR) + line(1598, 1275.5, 2260, 1275.5, DR);
    s += txt(1707, 1097, '└4.41', '#aaa', 'start', 13);
    s += txt(1596, 1120, '4.28', RED, 'end', 13.5) + txt(1596, 1134, '453', CY, 'end', 13.5) + txt(1596, 1180, '303', CY, 'end', 13.5) + txt(1596, 1226, '153', CY, 'end', 13.5);
    s += `<rect x="1560.5" y="1253.5" width="37" height="14" fill="none" stroke="${DR}"/>` + txt(1579, 1265, 'X1000', CY, 'middle', 12);
    s += txt(1599, 1131, '总手:84893↓', RED, 'start', 13);
    s += line(2151, 1114, 2151, 1135, DR) + line(2151, 1135.5, 2260, 1135.5, DR) + txt(2203, 1131, '成交量', '#ccc', 'middle', 13) + txt(2250, 1129, '▾', '#ccc', 'middle', 11);
    [1136, 1182, 1228].forEach(y => { s += line(1598, y, 2260, y, DR, 1, '1 3'); });
    const volBars = 'c798,r784,c798,c796,r805,c777,r790,r790,c796,r787,r786,r787,c792,c792,r802,c756,r784,c705,r733,r763,r750,r730,c747,r676,r559,c660,c696,c729,r727,r739,c750,r740,r730,r532,c408,c591,c672,c711,c717,c744,c754,r766,r756,r745,r756,r697,c714,r745,c762,c753,r767,c780,r784,r784,r770,c775,r790,c786,r703,c705,c772,c775,c783,r784,c786,c793,r784,c792,r800,r765,r725,r756,r745,r634,r553,c642,r703,c723,r748,c756,r775,c756,r745,r750,r753,r760,r765,r750,c703,r709,r709,r745'.split(',');
    const step = (1535 - 527) / (volBars.length - 1);
    volBars.forEach((b, i) => {
      const x = +(1270 + (527 + i * step) / 1.584 - 2.5).toFixed(1), y = +(1000 + (+b.slice(1)) / 3).toFixed(1), h = +(1275 - y).toFixed(1);
      s += b[0] === 'c' ? `<rect x="${x}" y="${y}" width="5" height="${h}" fill="#55ffff"/>`
                        : `<rect x="${x + .5}" y="${y}" width="4" height="${h}" fill="#000" stroke="${RED}"/>`;
    });
    [['06', 1590], ['07', 1665], ['08', 1825], ['09', 1978], ['10', 2113]].forEach(d => { s += txt(d[1], 1290, d[0], RED, 'middle', 14); });
    s += txt(1939, 1236, '激活 Windows', 'rgba(200,200,200,.6)', 'start', 21);
    s += txt(1939, 1259, '转到“设置”以激活 Windows。', 'rgba(200,200,200,.55)', 'start', 15);
    document.getElementById('sideChart').innerHTML = s;
  })();
</script>

</body>
</html>
